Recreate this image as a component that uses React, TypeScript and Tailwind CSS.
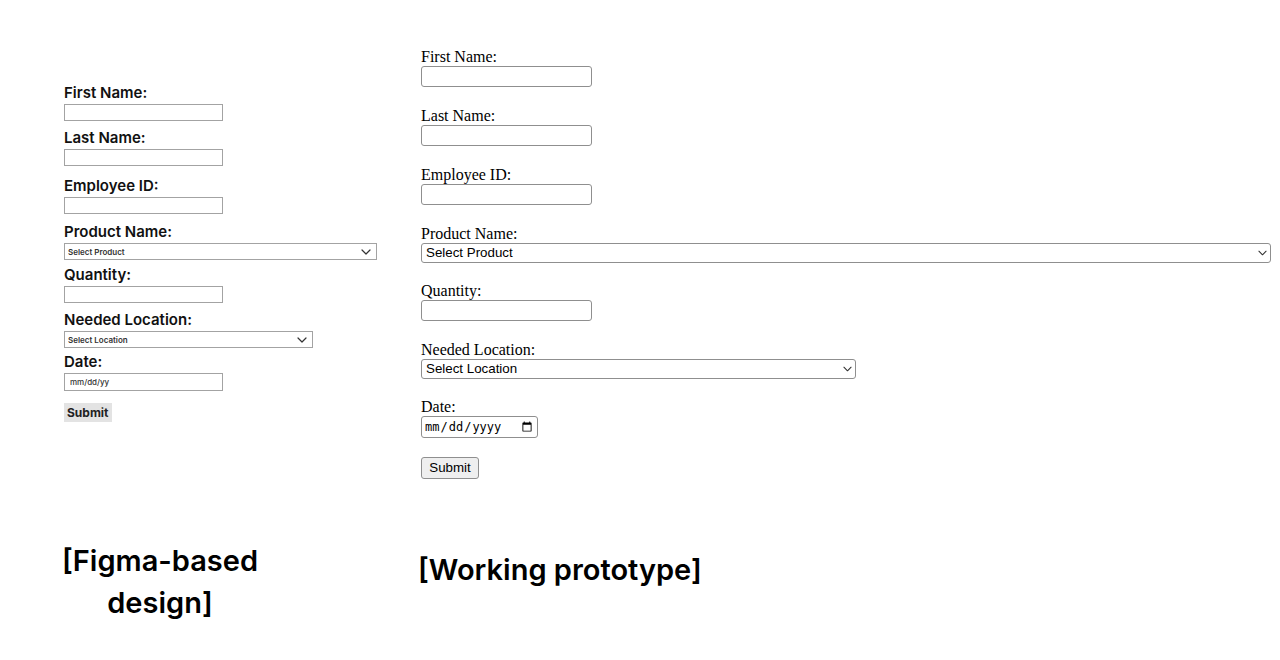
import { ChangeEvent, useState } from 'react';

type Field = {
  label: string;
  kind: 'text' | 'select' | 'date';
  width?: string;
  placeholder?: string;
  gap: string;
};

const figmaFields: Field[] = [
  { label: 'First Name:', kind: 'text', gap: 'mb-[8px]' },
  { label: 'Last Name:', kind: 'text', gap: 'mb-[11px]' },
  { label: 'Employee ID:', kind: 'text', gap: 'mb-[9px]' },
  { label: 'Product Name:', kind: 'select', width: 'w-[313px]', placeholder: 'Select Product', gap: 'mb-[6px]' },
  { label: 'Quantity:', kind: 'text', gap: 'mb-[8px]' },
  { label: 'Needed Location:', kind: 'select', width: 'w-[249px]', placeholder: 'Select Location', gap: 'mb-[5px]' },
  { label: 'Date:', kind: 'date', gap: 'mb-[12px]' },
];

const protoFields: Field[] = [
  { label: 'First Name:', kind: 'text', gap: 'mb-[20px]' },
  { label: 'Last Name:', kind: 'text', gap: 'mb-[20px]' },
  { label: 'Employee ID:', kind: 'text', gap: 'mb-[20px]' },
  { label: 'Product Name:', kind: 'select', width: 'w-full', placeholder: 'Select Product', gap: 'mb-[19px]' },
  { label: 'Quantity:', kind: 'text', gap: 'mb-[20px]' },
  { label: 'Needed Location:', kind: 'select', width: 'w-[435px]', placeholder: 'Select Location', gap: 'mb-[19px]' },
  { label: 'Date:', kind: 'date', gap: 'mb-[19px]' },
];

function Chevron({ className }: { className: string }) {
  return (
    <svg className={`pointer-events-none absolute top-1/2 -translate-y-1/2 ${className}`} viewBox="0 0 10 6" fill="none">
      <polyline points="1,1 5,5 9,1" stroke="#333" strokeWidth="1.2" strokeLinecap="round" strokeLinejoin="round" />
    </svg>
  );
}

function FigmaForm() {
  return (
    <form className="flex flex-col items-start pl-1 font-['Inter',sans-serif] text-[#111]" onSubmit={(e) => e.preventDefault()}>
      {figmaFields.map((f) => (
        <div key={f.label} className={`flex flex-col items-start ${f.gap}`}>
          <label className="text-[15px] font-semibold leading-[18px] mb-[2px]">{f.label}</label>
          {f.kind === 'select' ? (
            <div className={`relative ${f.width}`}>
              <select className="block appearance-none w-full h-[17px] border border-[#a3a3a3] bg-white pl-[3px] text-[8px] font-semibold text-[#333] outline-none">
                <option>{f.placeholder}</option>
              </select>
              <Chevron className="right-[6px] w-[10px] h-[6px]" />
            </div>
          ) : (
            <input
              type="text"
              placeholder={f.kind === 'date' ? 'mm/dd/yy' : ''}
              className={`block w-[159px] border border-[#a3a3a3] bg-white px-[5px] text-[8px] font-medium placeholder:text-[#333] outline-none ${
                f.kind === 'date' ? 'h-[18px]' : 'h-[17px]'
              }`}
            />
          )}
        </div>
      ))}
      <button type="submit" className="h-[19px] px-[3px] bg-[#e3e3e3] text-[12px] font-bold leading-[19px] text-[#222]">
        Submit
      </button>
    </form>
  );
}

function ProtoForm() {
  const [date, setDate] = useState('');

  return (
    <form className="flex flex-col items-start font-['Liberation_Serif',serif] text-black" onSubmit={(e) => e.preventDefault()}>
      {protoFields.map((f) => (
        <div key={f.label} className={`flex flex-col items-start ${f.width === 'w-full' ? 'self-stretch' : ''} ${f.gap}`}>
          <label className="text-[16px] leading-[18px]">{f.label}</label>
          {f.kind === 'select' && (
            <div className={`relative ${f.width}`}>
              <select className="block appearance-none w-full h-[20px] rounded-[3px] border border-[#8f8f8f] bg-white pl-[4px] font-['Liberation_Sans',sans-serif] text-[13.33px] leading-[18px] text-black outline-none">
                <option>{f.placeholder}</option>
              </select>
              <Chevron className="right-[4px] w-[9px] h-[6px]" />
            </div>
          )}
          {f.kind === 'text' && (
            <input type="text" className="block w-[171px] h-[21px] rounded-[3px] border border-[#8f8f8f] bg-white px-[2px] font-['Liberation_Sans',sans-serif] text-[13.33px] outline-none" />
          )}
          {f.kind === 'date' && (
            <input
              type="date"
              value={date}
              onChange={(e: ChangeEvent<HTMLInputElement>) => setDate(e.target.value)}
              className="block w-[117px] h-[22px] rounded-[3px] border border-[#8f8f8f] bg-white px-[2px] font-['DejaVu_Sans_Mono',monospace] text-[12px] text-black outline-none"
            />
          )}
        </div>
      ))}
      <button
        type="submit"
        className="h-[22px] w-[58px] rounded-[3px] border border-[#8f8f8f] bg-[#efefef] font-['Liberation_Sans',sans-serif] text-[13.33px] text-black"
      >
        Submit
      </button>
    </form>
  );
}

export default function App() {
  return (
    <div className="flex min-h-[660px] w-[1280px] bg-white">
      <div className="w-[421px] shrink-0 pl-[60px] pt-[84px]">
        <FigmaForm />
        <p className="mt-[118px] w-[200px] text-center font-['Inter',sans-serif] text-[29px] font-semibold leading-[42px] text-black">
          [Figma-based design]
        </p>
      </div>
      <div className="flex-1 pr-[9px] pt-[48px]">
        <ProtoForm />
        <p className="mt-[70px] -ml-[3px] font-['Inter',sans-serif] text-[29px] font-semibold leading-[42px] text-black">
          [Working prototype]
        </p>
      </div>
    </div>
  );
}
